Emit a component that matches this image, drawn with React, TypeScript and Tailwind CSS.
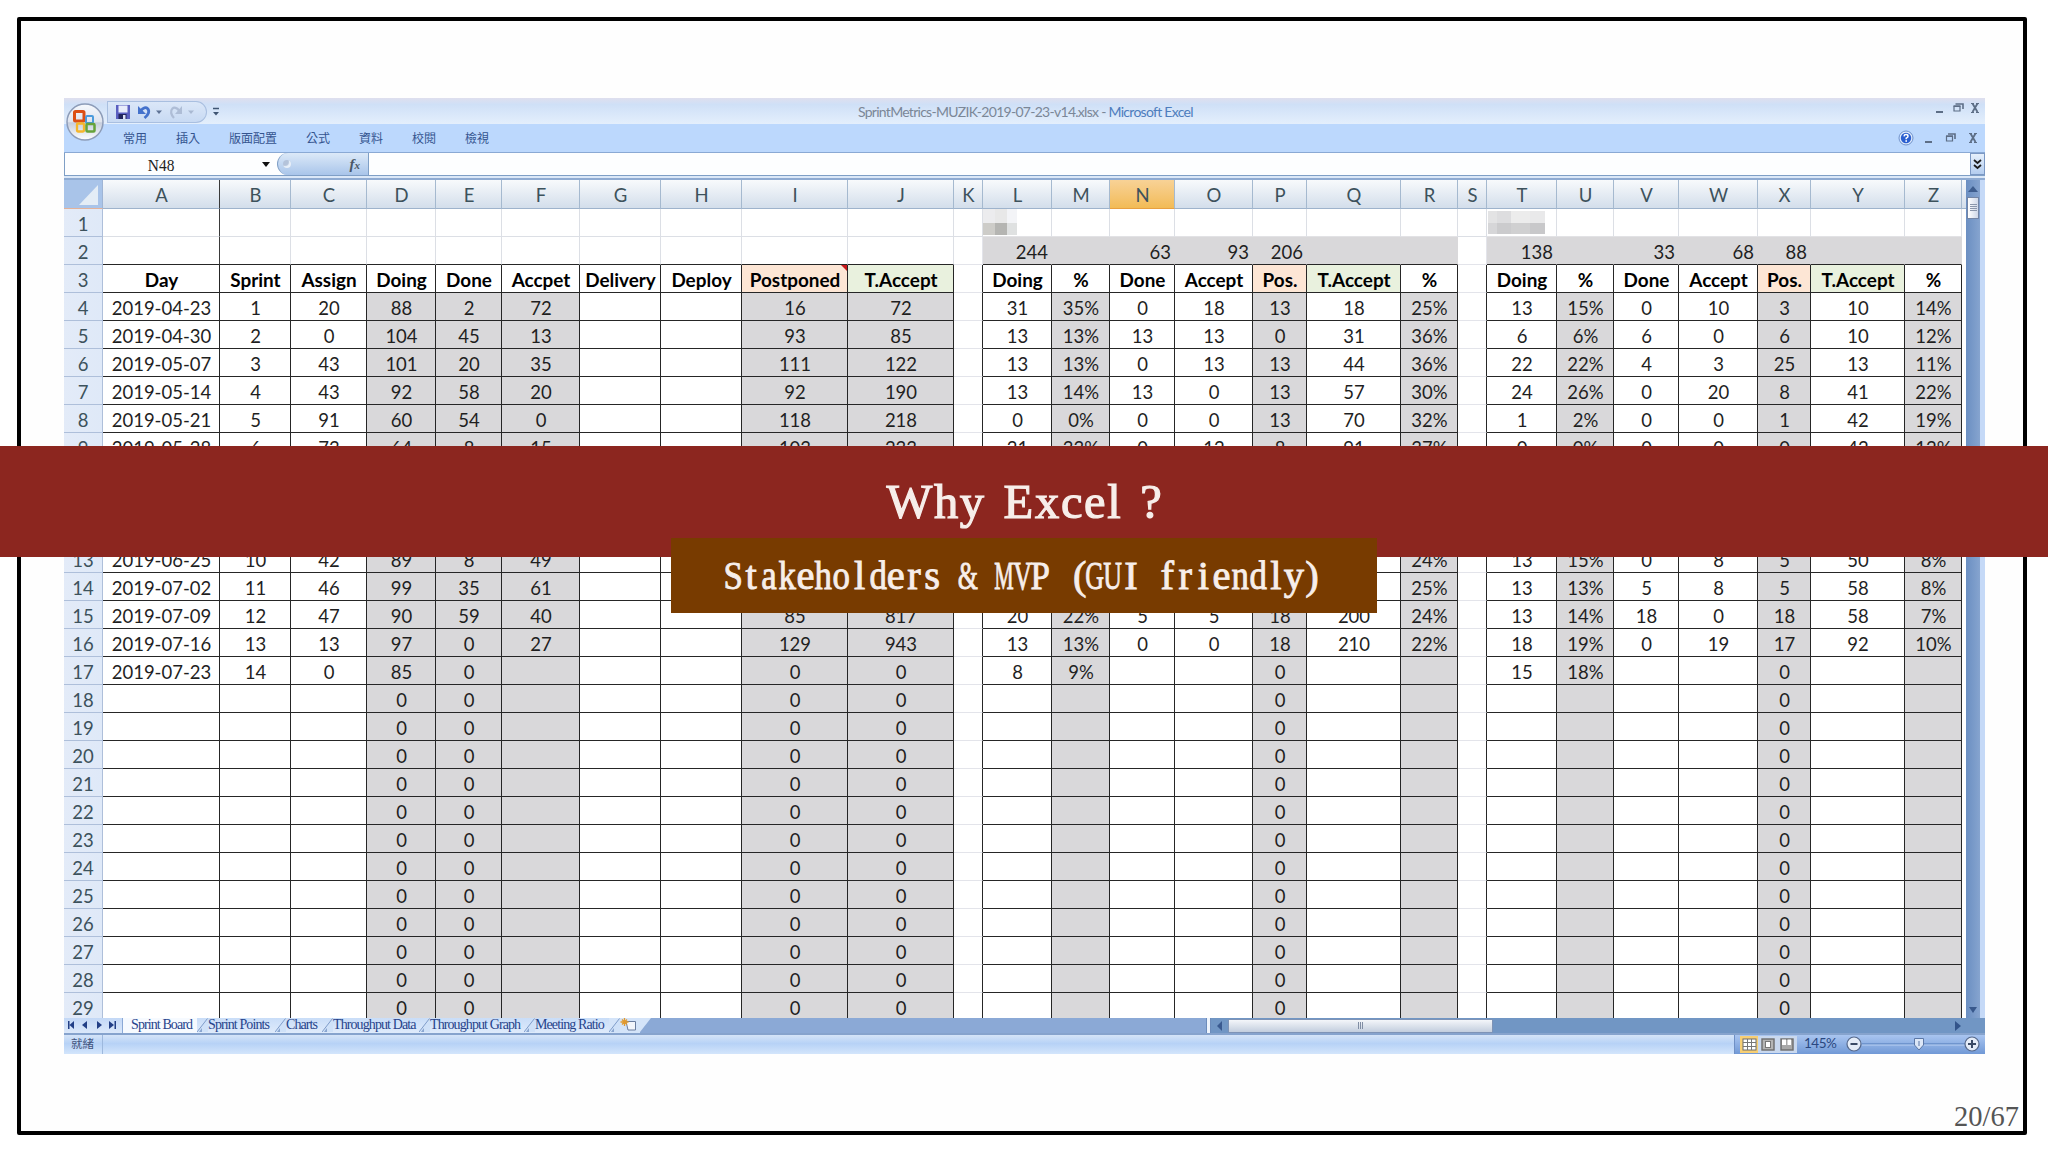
import type { ReactNode } from 'react';
import clsx from 'clsx';

type Fill = 'none' | 'gray';

interface Column {
  name: string;
  width: number;
  fill: Fill;
  title: string;
}

const COLUMNS: Column[] = [
  { name: 'A', width: 117, fill: 'none', title: 'Day' },
  { name: 'B', width: 71, fill: 'none', title: 'Sprint' },
  { name: 'C', width: 76, fill: 'none', title: 'Assign' },
  { name: 'D', width: 69, fill: 'gray', title: 'Doing' },
  { name: 'E', width: 66, fill: 'gray', title: 'Done' },
  { name: 'F', width: 78, fill: 'gray', title: 'Accpet' },
  { name: 'G', width: 81, fill: 'none', title: 'Delivery' },
  { name: 'H', width: 81, fill: 'none', title: 'Deploy' },
  { name: 'I', width: 106, fill: 'gray', title: 'Postponed' },
  { name: 'J', width: 106, fill: 'gray', title: 'T.Accept' },
  { name: 'K', width: 29, fill: 'none', title: '' },
  { name: 'L', width: 69, fill: 'none', title: 'Doing' },
  { name: 'M', width: 58, fill: 'gray', title: '%' },
  { name: 'N', width: 65, fill: 'none', title: 'Done' },
  { name: 'O', width: 78, fill: 'none', title: 'Accept' },
  { name: 'P', width: 54, fill: 'gray', title: 'Pos.' },
  { name: 'Q', width: 94, fill: 'none', title: 'T.Accept' },
  { name: 'R', width: 57, fill: 'gray', title: '%' },
  { name: 'S', width: 29, fill: 'none', title: '' },
  { name: 'T', width: 70, fill: 'none', title: 'Doing' },
  { name: 'U', width: 57, fill: 'gray', title: '%' },
  { name: 'V', width: 65, fill: 'none', title: 'Done' },
  { name: 'W', width: 79, fill: 'none', title: 'Accept' },
  { name: 'X', width: 53, fill: 'gray', title: 'Pos.' },
  { name: 'Y', width: 94, fill: 'none', title: 'T.Accept' },
  { name: 'Z', width: 57, fill: 'gray', title: '%' },
];

const TOTALS: Record<string, string> = {
  L: '244', N: '63', O: '93', P: '206', T: '138', V: '33', W: '68', X: '88',
};

// one entry per sheet row, cells in column order A..Z
const DATA: Record<number, string> = {
  4: '2019-04-23,1,20,88,2,72,,,16,72,,31,35%,0,18,13,18,25%,,13,15%,0,10,3,10,14%',
  5: '2019-04-30,2,0,104,45,13,,,93,85,,13,13%,13,13,0,31,36%,,6,6%,6,0,6,10,12%',
  6: '2019-05-07,3,43,101,20,35,,,111,122,,13,13%,0,13,13,44,36%,,22,22%,4,3,25,13,11%',
  7: '2019-05-14,4,43,92,58,20,,,92,190,,13,14%,13,0,13,57,30%,,24,26%,0,20,8,41,22%',
  8: '2019-05-21,5,91,60,54,0,,,118,218,,0,0%,0,0,13,70,32%,,1,2%,0,0,1,42,19%',
  9: '2019-05-28,6,73,64,8,15,,,103,233,,21,33%,0,12,8,91,37%,,0,0%,0,0,0,42,12%',
  13: '2019-06-25,10,42,89,8,49,,,,,,,,,,,,24%,,13,15%,0,8,5,50,8%',
  14: '2019-07-02,11,46,99,35,61,,,,,,,,,,,,25%,,13,13%,5,8,5,58,8%',
  15: '2019-07-09,12,47,90,59,40,,,85,817,,20,22%,5,5,18,200,24%,,13,14%,18,0,18,58,7%',
  16: '2019-07-16,13,13,97,0,27,,,129,943,,13,13%,0,0,18,210,22%,,18,19%,0,19,17,92,10%',
  17: '2019-07-23,14,0,85,0,,,,0,0,,8,9%,,,0,,,,15,18%,,,0,,',
};
const EMPTY_ROW = ',,,0,0,,,,0,0,,,,,,0,,,,,,,,0,,';

const ROWS = Array.from({ length: 29 }, (_, i) => i + 1);
const MENU = ['常用', '插入', '版面配置', '公式', '資料', '校閱', '檢視'];
const SHEETS = [
  { name: 'Sprint Points', width: 67 },
  { name: 'Charts', width: 36 },
  { name: 'Throughput Data', width: 86 },
  { name: 'Throughput Graph', width: 94 },
  { name: 'Meeting Ratio', width: 74 },
];

const isGap = (name: string) => name === 'K' || name === 'S';

function Mosaic({ name }: { name: string }) {
  if (name === 'L') {
    return (
      <span className="absolute left-0 top-0 grid grid-cols-[12px_12px_10px] grid-rows-[14px_12px]">
        <i className="bg-[#ececee]" /><i className="bg-[#e8e8e8]" /><i className="bg-[#f3f4f7]" />
        <i className="bg-[#cdccc8]" /><i className="bg-[#b5b5b2]" /><i className="bg-[#dfe1e1]" />
      </span>
    );
  }
  return (
    <span className="absolute left-[1px] top-[2px] grid grid-cols-[9px_14px_19px_15px] grid-rows-[12px_11px]">
      <i className="bg-[#e3e3e4]" /><i className="bg-[#dddddf]" /><i className="bg-[#ececec]" /><i className="bg-[#e9e9ea]" />
      <i className="bg-[#d6d6d8]" /><i className="bg-[#cbcbcd]" /><i className="bg-[#d0d0d1]" /><i className="bg-[#c8c8ca]" />
    </span>
  );
}

function Cell({ row, col, value }: { row: number; col: Column; value: string }) {
  const gap = isGap(col.name);
  const afterGap = col.name > 'K' && !gap;

  let look = '';
  if (row === 1) {
    look = col.name === 'A' ? 'border-b-[#dcdfe5] border-r-[#3a3a3a]' : 'border-[#dcdfe5]';
    if (afterGap) look = 'border-r-[#dcdfe5] border-b-[#e2e2e5]';
  } else if (row === 2) {
    look = gap
      ? 'border-[#e3e4ea]'
      : afterGap
        ? 'bg-[#d9d8da] border-r-[#d9d8da] border-b-[#262626]'
        : clsx('border-b-[#262626]', col.name === 'A' ? 'border-r-[#3a3a3a]' : 'border-r-[#dcdfe5]');
  } else if (gap) {
    look = 'border-b-[#e3e4ea] border-r-[#262626]';
  } else {
    look = clsx(
      'border-[#262626]',
      row === 3 && 'font-bold text-black text-[18.900px]',
      row === 3 && (col.title === 'Postponed' || col.title === 'Pos.') && 'bg-[#fde6d5]',
      row === 3 && col.title === 'T.Accept' && 'bg-[#e9f1de]',
      row > 3 && col.fill === 'gray' && 'bg-[#d9d8da]',
    );
  }

  return (
    <div
      className={clsx(
        'relative h-7 shrink-0 border-r border-b flex items-center pt-1',
        row === 2 ? 'justify-end pr-[3px]' : 'justify-center pl-px',
        look,
      )}
      style={{ width: col.width }}
    >
      {row === 1 && (col.name === 'L' || col.name === 'T') && <Mosaic name={col.name} />}
      {row === 3 && col.name === 'I' && (
        <svg className="absolute right-0 top-0" width="6" height="6"><path d="M0 0H6V6Z" fill="#c8191c" /></svg>
      )}
      <span className="whitespace-nowrap">{value}</span>
    </div>
  );
}

function SheetRow({ row }: { row: number }) {
  const values = (DATA[row] ?? (row > 17 ? EMPTY_ROW : '')).split(',');
  return (
    <div className="flex">
      <div className="w-[39px] h-7 shrink-0 flex items-center justify-center pt-1 border-r border-b border-[#aebfda] bg-linear-to-r from-[#e3ebf8] to-[#dfe9f8] text-[#3d525c]">
        {row}
      </div>
      {COLUMNS.map((col, i) => (
        <Cell
          key={col.name}
          row={row}
          col={col}
          value={row === 2 ? TOTALS[col.name] ?? '' : row === 3 ? col.title : values[i] ?? ''}
        />
      ))}
    </div>
  );
}

function WindowButtons({ className }: { className: string }) {
  return (
    <svg className={className} width="50" height="14" viewBox="0 0 50 14" fill="none" stroke="#5d6e86">
      <path d="M3 11H10" strokeWidth="2" />
      <path d="M21 5.500H27V10H21Z" strokeWidth="1.200" />
      <path d="M20.500 5H27.500M22.500 3H30V8" strokeWidth="1.600" />
      <path d="M39.500 2.500L44.500 11M44.500 2.500L39.500 11" strokeWidth="1.800" />
      <path d="M38 2.500H41M43 2.500H46M38 11.500H41M43 11.500H46" strokeWidth="1" />
    </svg>
  );
}

function TitleBar() {
  return (
    <div className="relative h-[26px] flex items-center bg-linear-to-b from-[#dfdfee] via-[#cfe0f7] via-25% to-[#e4effc]">
      <div className="ml-[43px] w-[100px] h-[22px] mt-[1px] rounded-r-full rounded-tl-lg border border-[#a9bfe0] bg-linear-to-b from-[#dbe7f8] to-[#c8daf3]">
        <svg width="98" height="20" viewBox="0 0 98 20" fill="none">
          <rect x="8" y="3" width="14" height="14" fill="#5a5fc0" />
          <rect x="10.500" y="3.500" width="9" height="7" fill="#e8ecfb" />
          <rect x="10.500" y="12" width="8" height="5" fill="#23265e" />
          <rect x="15" y="13" width="2.500" height="4" fill="#dfe4f7" />
          <path d="M30 4V12H38Z" fill="#4472cc" />
          <path d="M33 8.500C35 5.500 38 5 39.500 6.500C42 9 40.500 13 36.500 16" stroke="#4472cc" strokeWidth="2.800" />
          <path d="M48 8.500H54L51 12Z" fill="#5f7396" />
          <path d="M74 4V12H67Z" fill="#aebdd6" />
          <path d="M71 8.500C69 5.500 66 5 64.500 6.500C62 9 63 13 66 16" stroke="#aebdd6" strokeWidth="2.300" />
          <path d="M80 8.500H86L83 12Z" fill="#a9b9d2" />
        </svg>
      </div>
      <svg className="ml-[5px] mt-px" width="8" height="10" viewBox="0 0 8 10">
        <path d="M1 1.500H7" stroke="#3f5573" strokeWidth="1.500" />
        <path d="M1 5H7L4 8.500Z" fill="#3f5573" />
      </svg>
      <div className="ml-[638px] pt-[2px] w-[340px] text-[14px] leading-none tracking-[-0.720px] whitespace-nowrap text-[#7b8797]">
        SprintMetrics-MUZIK-2019-07-23-v14.xlsx - <span className="text-[#4e7dbd]">Microsoft Excel</span>
      </div>
      <WindowButtons className="ml-auto mr-[2px] -mt-[7px]" />
    </div>
  );
}

function OfficeButton() {
  return (
    <svg className="absolute left-[1px] top-[4px]" width="40" height="40" viewBox="0 0 40 40" fill="none">
      <defs>
        <linearGradient id="orb" x1="0" y1="0" x2="0" y2="1">
          <stop offset="0" stopColor="#f6f9fd" />
          <stop offset=".5" stopColor="#dfe4ee" />
          <stop offset=".52" stopColor="#c6cedd" />
          <stop offset="1" stopColor="#fdfeff" />
        </linearGradient>
      </defs>
      <circle cx="20" cy="20" r="18" fill="url(#orb)" stroke="#8d9cb8" strokeWidth="1.500" />
      <rect x="9.500" y="9.500" width="9.500" height="9.500" rx="1" stroke="#dc4f14" strokeWidth="3" />
      <rect x="21" y="14" width="7" height="7" rx="1" stroke="#4b9bdc" strokeWidth="2" />
      <rect x="12" y="21.500" width="7" height="8" rx="1" stroke="#f5b62c" strokeWidth="2.300" />
      <rect x="21.500" y="22" width="8" height="7.500" rx="1" stroke="#66a33a" strokeWidth="2.500" />
    </svg>
  );
}

function Ribbon() {
  return (
    <div className="h-[29px] flex items-center gap-[29px] pl-[59px] bg-[#bcd8fd] border-b border-[#8aa9d4] font-['Noto_Sans_CJK_TC',sans-serif] text-[12px] leading-none text-[#34548f]">
      {MENU.map((item) => (
        <span key={item}>{item}</span>
      ))}
      <svg className="ml-auto -mr-[19px]" width="16" height="16" viewBox="0 0 16 16">
        <circle cx="8" cy="8" r="7" fill="#dce8fa" stroke="#6f92cc" />
        <circle cx="8" cy="8" r="5.200" fill="#2b5fd0" />
        <path d="M6 6.300Q6.200 4.600 8 4.600Q10 4.600 10 6.200Q10 7.300 8.200 8.200V9.200" stroke="#fff" strokeWidth="1.500" fill="none" />
        <rect x="7.400" y="10.200" width="1.600" height="1.600" fill="#fff" />
      </svg>
      <svg className="mr-[5px] -mt-px" width="56" height="14" viewBox="0 0 56 14" fill="none" stroke="#5d6e86">
        <path d="M1 11H8" strokeWidth="2" />
        <path d="M22.500 5.500H28.500V10H22.500Z" strokeWidth="1.200" />
        <path d="M22 5H29M24 3H31V8" strokeWidth="1.600" />
        <path d="M46.500 2.500L51.500 11M51.500 2.500L46.500 11" strokeWidth="1.800" />
        <path d="M45 2.500H48M50 2.500H53M45 11.500H48M50 11.500H53" strokeWidth="1" />
      </svg>
    </div>
  );
}

function FormulaBar() {
  return (
    <div className="h-[27px] border-b-2 border-[#8fabd2] bg-[#dbe8f8]">
      <div className="h-[23px] flex items-center bg-[#fdfeff] border-b border-l border-[#7f9fc6]">
        <div className="w-[192px] flex justify-center pt-[3px] font-['Liberation_Serif',serif] text-[17.500px] leading-none text-[#222]">
          <span className="scale-x-[0.880]">N48</span>
        </div>
        <svg className="ml-[5px]" width="8" height="5"><path d="M0 0H8L4 5Z" fill="#111" /></svg>
        <div className="ml-[7px] w-[92px] h-[22px] flex items-center justify-between pl-[5px] pr-[8px] rounded-l-full border-l border-r border-[#7f9fc6] bg-linear-to-b from-[#dce9f8] to-[#a9c5ea]">
          <span className="w-[8px] h-[8px] rounded-full bg-[#b4c3da] shadow-[inset_-2px_-2px_1px_#e8f0fa]" />
          <span className="font-['Liberation_Serif',serif] italic font-bold text-[15px] leading-none text-[#4a5666]">
            f<span className="text-[11px]">x</span>
          </span>
        </div>
        <div className="ml-auto w-[15px] h-[22px] flex items-center justify-center border border-[#7b98c4] bg-linear-to-b from-[#e6f0fc] to-[#b4cdef]">
          <svg width="9" height="11" fill="none" stroke="#1b1b1b" strokeWidth="1.800"><path d="M1 1L4.500 4L8 1M1 6L4.500 9L8 6" /></svg>
        </div>
      </div>
    </div>
  );
}

function ColumnHeader() {
  return (
    <div className="flex h-[29px] text-[#3d525c]">
      <div className="w-[39px] shrink-0 border-r border-b border-r-[#9fb5d5] border-b-[#e3b29a] bg-[#a9c4e9] flex justify-end items-end pr-[4px] pb-[3px]">
        <svg width="19" height="20"><path d="M19 0V20H0Z" fill="#e4edf6" /></svg>
      </div>
      {COLUMNS.map((col) => (
        <div
          key={col.name}
          className={clsx(
            'shrink-0 flex items-center justify-center pt-[3px] pl-px border-r border-b',
            col.name === 'N'
              ? 'bg-linear-to-b from-[#f8d296] to-[#f2bb55] border-[#e8a040]'
              : 'bg-linear-to-b from-[#f8fafc] to-[#d3deeb] border-b-[#9eb3cc]',
            col.name === 'A' ? 'border-r-[#3a3a3a]' : 'border-r-[#a5b9cf]',
          )}
          style={{ width: col.width }}
        >
          {col.name}
        </div>
      ))}
      <div className="flex-1 border-b border-[#9eb3cc] bg-linear-to-b from-[#f8fafc] to-[#d3deeb]" />
    </div>
  );
}

function VerticalScroll() {
  return (
    <div className="w-[19px] h-[838px] shrink-0 flex bg-[#c5d9f7]">
      <div className="w-[14px] flex flex-col items-center bg-linear-to-r from-[#6b8fc2] to-[#86a4cf]">
        <svg className="mt-[6px]" width="10" height="6"><path d="M0 6H10L5 0Z" fill="#3e5d8e" /></svg>
        <div className="mt-[5px] w-[12px] h-[22px] flex items-center justify-center border border-[#7385a5] bg-linear-to-r from-white to-[#cfd8e8]">
          <svg width="7" height="10" stroke="#8a96ab"><path d="M0 1.500H7M0 3.500H7M0 5.500H7M0 7.500H7" /></svg>
        </div>
        <svg className="mt-auto mb-[5px]" width="8" height="6"><path d="M0 0H8L4 6Z" fill="#38588c" /></svg>
      </div>
    </div>
  );
}

function Slash() {
  return (
    <svg className="shrink-0" width="11" height="14" viewBox="0 0 11 14">
      <path d="M0 14L11 0V14Z" fill="#cfe1f8" />
      <path d="M0 14L10.500 0.500" stroke="#7f9cc9" />
      <path d="M2 14L5 10V14Z" fill="#8aa6d0" />
    </svg>
  );
}

function SheetTabs() {
  return (
    <div className="h-[15px] flex bg-[#8ba9d6] font-['Liberation_Serif',serif] text-[14px] leading-[14px] tracking-[-0.900px] text-[#26438b] whitespace-nowrap">
      <div className="w-[59px] shrink-0 border-r border-[#8ba9d6] bg-linear-to-b from-[#c3d8f6] to-[#dbe8fa]">
        <svg width="58" height="14" fill="#223f86">
          <path d="M4 3H5.500V11H4ZM10 3V11L5.500 7ZM23 3V11L18 7ZM33 3V11L38 7ZM45 3V11L50 7ZM50.500 3H52V11H50.500Z" />
        </svg>
      </div>
      <div className="w-[74px] shrink-0 pl-[8px] bg-[#f6faff]">Sprint Board</div>
      <div className="flex bg-[#d4e4f9]">
        {SHEETS.map((sheet) => (
          <div key={sheet.name} className="flex bg-linear-to-b from-[#c9ddf8] to-[#dfebfb]">
            <Slash />
            <span style={{ width: sheet.width }}>{sheet.name}</span>
          </div>
        ))}
        <Slash />
        <svg width="20" height="14" viewBox="0 0 20 14">
          <path d="M6 3.500H15.500V12H8Z" fill="#f2f5fb" stroke="#6a7d9f" />
          <path d="M4.500 0V8M0.500 4H8.500M2 1.500L7 6.500M7 1.500L2 6.500" stroke="#e29a2e" strokeWidth="1.300" />
        </svg>
      </div>
      <svg className="shrink-0" width="11" height="14"><path d="M0 0H11L0 14Z" fill="#d4e4f9" /></svg>
      <div className="ml-auto w-[779px] flex items-center bg-[#7196c4]">
        <div className="w-[5px] h-full border-x border-[#6c8cbb] bg-[#eef4fc]" />
        <svg className="ml-[6px]" width="6" height="10"><path d="M5 0V10L0 5Z" fill="#3a5a90" /></svg>
        <div className="ml-[5px] w-[265px] h-[14px] flex items-center justify-center border border-[#7e93b6] rounded-[1px] bg-linear-to-b from-[#f4f6fa] to-[#c3cede]">
          <svg width="8" height="7" stroke="#808da4"><path d="M1.500 0V7M3.500 0V7M5.500 0V7" /></svg>
        </div>
        <svg className="ml-auto mr-[24px]" width="6" height="10"><path d="M0 0V10L6 5Z" fill="#33548a" /></svg>
      </div>
    </div>
  );
}

function StatusBar() {
  return (
    <div className="h-[21px] flex items-stretch border-t-2 border-[#86a3cd] bg-linear-to-b from-[#d5e4f8] via-[#b7d2f6] via-45% to-[#d3e5fb]">
      <div className="w-[39px] flex items-center pl-[7px] pb-px border-r border-[#9db8dd] font-['Noto_Sans_CJK_TC',sans-serif] text-[11.500px] leading-none text-[#41537c]">
        就緒
      </div>
      <div className="ml-auto w-[251px] flex items-center pb-px border-l border-[#6f90c4] bg-linear-to-b from-[#a9c5f0] to-[#7199d6]">
        <svg className="ml-[5px]" width="57" height="17" viewBox="0 0 57 17" fill="none">
          <rect width="18" height="17" fill="#f7cf74" />
          <rect x="18" width="39" height="17" fill="#c9d8ee" />
          <rect x="3" y="3" width="13" height="11" fill="#fff" stroke="#6d6d6d" />
          <path d="M3 6.500H16M3 10.500H16M7.500 3V14M11.500 3V14" stroke="#777" />
          <rect x="22" y="3" width="12" height="11" fill="#b5b5b5" stroke="#6d6d6d" strokeWidth="1.400" />
          <rect x="25.500" y="5.500" width="5" height="6" fill="#fff" stroke="#777" />
          <rect x="41" y="3" width="12" height="11" fill="#a9a9a9" stroke="#6d6d6d" strokeWidth="1.400" />
          <path d="M42 3.500H46V9H42ZM47.500 3.500H51V9H47.500Z" fill="#fff" />
        </svg>
        <span className="ml-[7px] w-[36px] text-[13.500px] leading-none tracking-[-0.500px] text-[#2a4780]">145%</span>
        <svg className="ml-[5px]" width="138" height="18" viewBox="0 0 138 18" fill="none">
          <path d="M17 9H120" stroke="#4f78b8" />
          <path d="M17 10H120" stroke="#b9d0f2" />
          <circle cx="9" cy="9" r="7" fill="#e4ecf8" stroke="#56698c" strokeWidth="1.200" />
          <path d="M5.500 9H12.500" stroke="#3a4a66" strokeWidth="2" />
          <path d="M69.500 3.500H78.500V10L74 15L69.500 10Z" fill="#dce7f7" stroke="#5b77a6" />
          <path d="M74 6V11" stroke="#5b77a6" />
          <circle cx="127" cy="9" r="7" fill="#e4ecf8" stroke="#56698c" strokeWidth="1.200" />
          <path d="M123 9H131M127 5V13" stroke="#3a4a66" strokeWidth="2" />
        </svg>
      </div>
    </div>
  );
}

function ExcelWindow() {
  return (
    <div className="relative w-[1921px] h-[956px] bg-white font-['Lato',sans-serif]">
      <TitleBar />
      <Ribbon />
      <FormulaBar />
      <OfficeButton />
      <div className="flex h-[838px] overflow-hidden text-[18.500px] leading-none text-[#1f1f1f]">
        <div className="w-[1902px] shrink-0">
          <ColumnHeader />
          {ROWS.map((row) => (
            <SheetRow key={row} row={row} />
          ))}
        </div>
        <VerticalScroll />
      </div>
      <SheetTabs />
      <StatusBar />
    </div>
  );
}

// Fixed-pitch serif line: each character sits in its own half-width cell
function PitchedText({ text }: { text: string }) {
  return (
    <span className="flex">
      {text.split('').map((char, i) => (
        <span key={i} className="w-[18.100px] flex justify-center whitespace-pre">
          <span
            className={clsx(
              'inline-block',
              /[MW]/.test(char) && 'scale-x-[0.540]',
              /[GUV&]/.test(char) && 'scale-x-[0.640]',
              /[SPadhkno]/.test(char) && 'scale-x-[0.860]',
              char === '(' && 'translate-x-[3px]',
            )}
          >
            {char}
          </span>
        </span>
      ))}
    </span>
  );
}

function Banner({ title, children }: { title: string; children: ReactNode }) {
  return (
    <div className="absolute left-0 top-[446px] w-[2048px] flex flex-col items-center font-['Liberation_Serif',serif] text-[#f7eeea]">
      <h1 className="w-full h-[111px] pt-[29px] pl-[2px] bg-[#8c261f] text-center text-[48.500px] leading-[54px] tracking-[1.700px] [word-spacing:4px] [-webkit-text-stroke:1.200px_#f7eeea]">
        {title}
      </h1>
      <div className="-mt-[19px] w-[706px] h-[75px] pr-[3px] flex justify-center pt-[15px] bg-[#783b00] text-[40.500px] leading-[46px] [-webkit-text-stroke:0.900px_#f7eeea]">
        {children}
      </div>
    </div>
  );
}

export default function App() {
  return (
    <div className="relative w-[2048px] h-[1152px] overflow-hidden bg-white pl-[17px] pt-[17px]">
      <div className="w-[2010px] h-[1118px] rounded-[2px] border-4 border-black bg-[#fefefe] pl-[43px] pt-[77px]">
        <ExcelWindow />
      </div>
      <Banner title="Why Excel ?">
        <PitchedText text="Stakeholders & MVP (GUI friendly)" />
      </Banner>
      <div className="absolute right-[29px] top-[1101px] font-['Liberation_Serif',serif] text-[28.500px] leading-8 text-[#555]">
        20/67
      </div>
    </div>
  );
}
